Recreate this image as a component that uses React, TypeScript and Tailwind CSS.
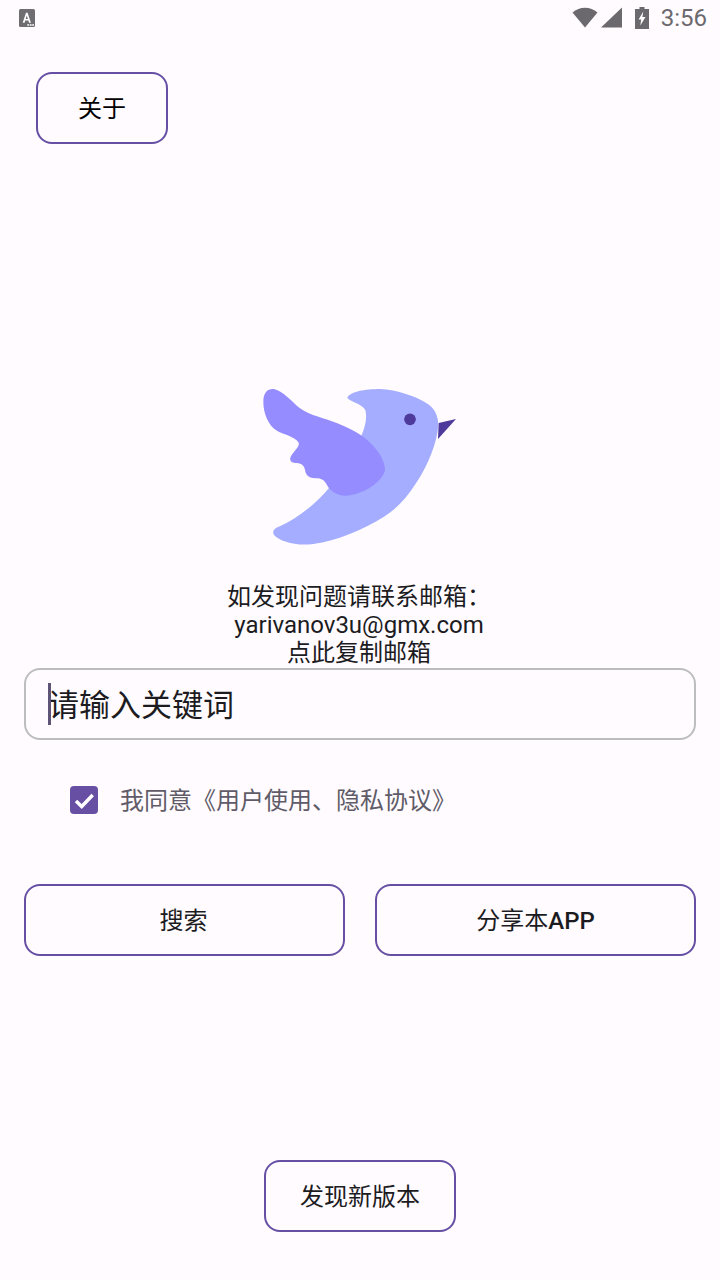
const font = { fontFamily: '"Roboto","Noto Sans CJK SC",sans-serif' };

function StatusBar() {
  return (
    <div className="flex h-9 items-center justify-between pl-[19px] pr-[13px]">
      <svg width="16" height="18" viewBox="0 0 16 18">
        <rect x="0" y="0" width="16" height="18" rx="1.5" fill="#6f6d72" />
        <path d="M3.7 13.7 L7 3.7 H8.6 L11.9 13.7 H10 L9.4 11.6 H6.2 L5.6 13.7 Z M6.7 10 H8.9 L7.8 6.4 Z" fill="#fff" />
        <rect x="8.3" y="15" width="1.8" height="2" fill="#ddd" />
        <rect x="10.8" y="15" width="1.8" height="2" fill="#ddd" />
        <rect x="13.2" y="15" width="1.8" height="2" fill="#ddd" />
      </svg>
      <div className="flex items-center">
        <svg className="mb-[2px]" width="26" height="21" viewBox="0 0 26 21">
          <path d="M0.5 5.5 C7.5 -1 18.5 -1 25.5 5.5 L13 20.5 Z" fill="#6b696e" />
        </svg>
        <svg className="mb-[2px] ml-[3px]" width="21" height="21" viewBox="0 0 21 21">
          <path d="M0 20.5 L21 0.5 V20.5 Z" fill="#6b696e" />
        </svg>
        <svg className="ml-[13px]" width="14" height="22" viewBox="0 0 14 22">
          <path d="M4.5 0 H9.5 V2 H14 V22 H0 V2 H4.5 Z" fill="#6b696e" />
          <path d="M8.3 4.5 L3.6 12.5 H6.2 L5.3 18.5 L10.5 10 H7.4 Z" fill="#fff" />
        </svg>
        <span className="ml-[12px] text-[24px] leading-9 text-[#6b696e]">3:56</span>
      </div>
    </div>
  );
}

function Bird() {
  return (
    <svg width="220" height="180" viewBox="0 0 660 540">
      <path
        d="M292 68 C300 50 345 42 390 42 C440 44 500 65 530 85 C555 100 565 125 565 150 C562 200 535 270 498 325 C470 368 442 400 402 425 C340 464 260 497 190 507 C140 514 90 500 72 480 C65 468 75 458 90 454 C140 432 200 385 240 335 L335 180 C345 155 352 130 346 105 C335 85 300 80 292 68 Z"
        fill="#a4adff"
      />
      <path
        d="M40 80 C40 50 55 40 72 42 C100 48 125 80 150 100 C180 122 225 130 262 145 C300 160 335 178 362 205 C390 232 405 262 405 285 C400 315 345 360 285 362 C262 362 245 350 235 337 C228 325 222 312 205 310 C180 310 168 305 165 285 C162 268 150 264 135 264 C118 262 118 250 125 240 C135 225 150 212 146 203 C135 185 100 178 82 168 C55 152 40 115 40 80 Z"
        fill="#958cff"
      />
      <circle cx="480" cy="133" r="17.5" fill="#4d3a9a" />
      <path d="M566 144 L618 132 L564 192 Z" fill="#4d3a9a" />
    </svg>
  );
}

function OutlineButton({ className, children }: { className: string; children: React.ReactNode }) {
  return (
    <div className={`flex h-[72px] items-center justify-center rounded-[16px] border-2 border-[#6750a4] pt-[2px] text-[24px] text-[#1c1b1f] ${className}`}>
      {children}
    </div>
  );
}

export default function App() {
  return (
    <div className="flex h-[1280px] w-[720px] flex-col overflow-hidden bg-[#fffbfe]" style={font}>
      <StatusBar />
      <OutlineButton className="ml-9 mt-9 w-[132px] text-black">关于</OutlineButton>
      <div className="mt-[231px] flex justify-center">
        <Bird />
      </div>
      <div className="mt-[28px] flex flex-col items-center pr-[2px] text-[24px] leading-[28px] text-[#1c1b1f]">
        <span>如发现问题请联系邮箱：</span>
        <span>yarivanov3u@gmx.com</span>
        <span>点此复制邮箱</span>
      </div>
      <div className="mx-6 mt-[1px] flex h-[72px] items-center rounded-[16px] border-2 border-[#bdbdbd] pl-[22px] pt-[4px] text-[31px] leading-[48px] text-[#1c1b1f]">
        <span className="relative block">
          <span className="absolute left-0 top-[1px] h-[42px] w-[3px] bg-[#5d5478]" />
          请输入关键词
        </span>
      </div>
      <div className="ml-[70px] mt-[46px] flex h-7 items-center">
        <div className="h-7 w-7 rounded-[4px] bg-[#6750a4]">
          <svg width="28" height="28" viewBox="0 0 28 28" fill="none">
            <path d="M6 15 L11.7 20.5 L22.7 9" stroke="#fff" strokeWidth="3.4" />
          </svg>
        </div>
        <span className="ml-[22px] pt-[2px] text-[24px] text-[#5f5b68]">我同意《用户使用、隐私协议》</span>
      </div>
      <div className="mx-6 mt-[70px] grid grid-cols-2 gap-[30px]">
        <OutlineButton className="pr-[2px]">搜索</OutlineButton>
        <OutlineButton className="">
          分享本<span className="font-medium">APP</span>
        </OutlineButton>
      </div>
      <div className="mt-[204px] flex justify-center">
        <OutlineButton className="w-[192px]">发现新版本</OutlineButton>
      </div>
    </div>
  );
}
